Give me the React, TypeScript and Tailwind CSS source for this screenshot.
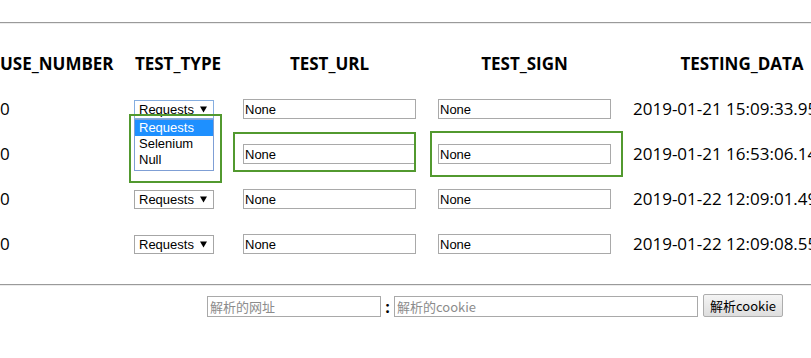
import React from "react";

const rows = [
  { date: "2019-01-21 15:09:33.95", focused: true, covered: false },
  { date: "2019-01-21 16:53:06.14", focused: false, covered: true },
  { date: "2019-01-22 12:09:01.49", focused: false, covered: false },
  { date: "2019-01-22 12:09:08.55", focused: false, covered: false },
];

function Select({ focused, covered }: { focused: boolean; covered: boolean }) {
  return (
    <div
      className={`relative mt-[1px] ml-[10px] h-[19px] w-[80px] border bg-white pl-[4px] font-['Liberation_Sans',Arial,sans-serif] text-[13px] leading-[17px] text-black ${
        focused ? "border-[#86aee0]" : "border-[#a6a6a6]"
      } ${covered ? "invisible" : "visible"}`}
    >
      Requests
      <svg
        className="absolute right-[6px] top-[5px]"
        width="7"
        height="7"
        viewBox="0 0 7 7"
      >
        <path d="M0 0.5H7L3.5 6.5Z" fill="#000" />
      </svg>
    </div>
  );
}

function TextBox() {
  return (
    <div className="ml-[11px] h-[20px] w-[173px] border border-[#a9a9a9] bg-white pl-[1px] font-['Liberation_Sans',Arial,sans-serif] text-[13px] leading-[19px] text-black">
      None
    </div>
  );
}

export default function App() {
  return (
    <div className="relative h-[358px] w-[811px] overflow-hidden bg-white text-black">
      {/* top rule */}
      <div className="pt-[22px]">
        <div className="h-[2px] border-t border-b border-t-[#9a9a9a] border-b-[#ececec]" />
      </div>

      {/* header */}
      <div className="mt-[28px] flex h-[24px] font-['Open_Sans',sans-serif] text-[17px] font-bold leading-[24px]">
        <div className="w-[124px] shrink-0 text-left">USE_NUMBER</div>
        <div className="w-[108px] shrink-0 text-center">TEST_TYPE</div>
        <div className="w-[195px] shrink-0 text-center">TEST_URL</div>
        <div className="w-[195px] shrink-0 text-center">TEST_SIGN</div>
        <div className="w-[240px] shrink-0 text-center">TESTING_DATA</div>
      </div>

      {/* rows */}
      <div className="mt-[11px]">
        {rows.map((r, i) => (
          <div key={i} className="flex h-[45px] items-start pt-[12px]">
            <div className="w-[124px] shrink-0 font-['Open_Sans',sans-serif] text-[17px] leading-[20px]">
              0
            </div>
            <div className="relative w-[108px] shrink-0">
              <Select focused={r.focused} covered={r.covered} />
              {r.focused && (
                <div className="absolute left-[10px] top-[20px] z-10 h-[52px] w-[80px] border border-[#7f9fd5] bg-white font-['Liberation_Sans',Arial,sans-serif] text-[13px]">
                  <div className="h-[16px] bg-[#1e90ff] pl-[4px] leading-[15px] text-white">
                    Requests
                  </div>
                  <div className="h-[16px] pl-[4px] leading-[15px] text-black">
                    Selenium
                  </div>
                  <div className="h-[16px] pl-[4px] leading-[15px] text-black">
                    Null
                  </div>
                </div>
              )}
            </div>
            <div className="w-[195px] shrink-0">
              <TextBox />
            </div>
            <div className="w-[195px] shrink-0">
              <TextBox />
            </div>
            <div className="w-[240px] shrink-0 whitespace-nowrap pl-[11px] font-['Open_Sans',sans-serif] text-[17px] leading-[20px]">
              {r.date}
            </div>
          </div>
        ))}
      </div>

      {/* bottom rule */}
      <div className="mt-[17px] h-[2px] border-t border-b border-t-[#9a9a9a] border-b-[#ececec]" />

      {/* cookie parser */}
      <div className="mt-[8px] flex items-end pl-[207px] font-['Noto_Sans_CJK_SC',sans-serif] text-[13px]">
        <input
          readOnly
          placeholder="解析的网址"
          className="h-[21px] w-[174px] border border-[#a9a9a9] bg-white px-[2px] text-[13px] outline-none placeholder:text-[#8c8c8c]"
        />
        <span className="flex h-[21px] w-[13px] items-center justify-center font-['Open_Sans',sans-serif] text-[16px] font-bold leading-none">
          :
        </span>
        <input
          readOnly
          placeholder="解析的cookie"
          className="h-[21px] w-[304px] border border-[#a9a9a9] bg-white px-[2px] text-[13px] outline-none placeholder:text-[#8c8c8c]"
        />
        <button className="ml-[5px] h-[23px] w-[80px] rounded-[2px] border border-[#adadad] bg-gradient-to-b from-[#f4f4f4] to-[#dedede] text-[13px] leading-[21px] text-black">
          解析cookie
        </button>
      </div>

      {/* green annotation boxes */}
      <div className="pointer-events-none absolute left-[129px] top-[114px] z-20 h-[69px] w-[93px] border-2 border-[#52992f]" />
      <div className="pointer-events-none absolute left-[233px] top-[132px] z-20 h-[40px] w-[183px] border-2 border-[#52992f]" />
      <div className="pointer-events-none absolute left-[430px] top-[131px] z-20 h-[46px] w-[193px] border-2 border-[#52992f]" />
    </div>
  );
}
